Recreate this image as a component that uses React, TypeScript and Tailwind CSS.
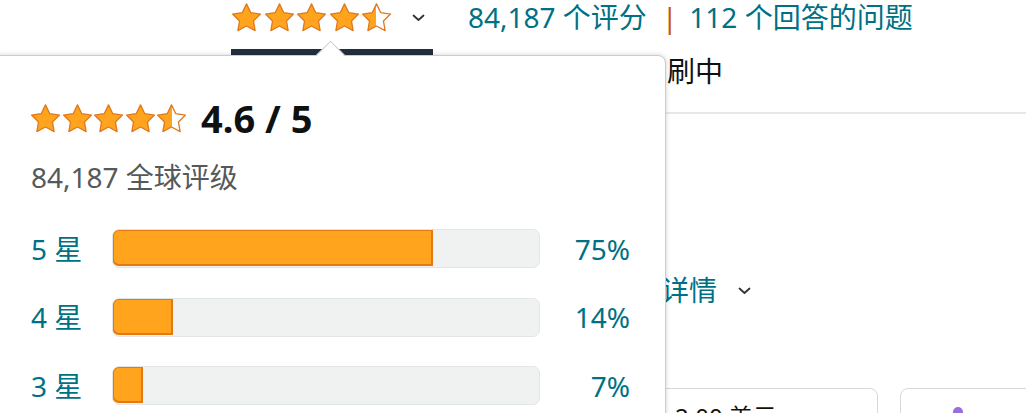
import React, { useId } from "react";

const STAR_PATH =
  "M12 2.2l2.95 6.1 6.7.95-4.85 4.7 1.15 6.65L12 17.45 6.05 20.6l1.15-6.65-4.85-4.7 6.7-.95z";

const Star: React.FC<{ fill?: "full" | "half"; size?: number }> = ({
  fill = "full",
  size = 28,
}) => {
  const id = useId().replace(/:/g, "");
  return (
    <svg width={size} height={size} viewBox="2 2 20 19.2" className="shrink-0">
      {fill === "half" && (
        <defs>
          <linearGradient id={`h${id}`} x1="0" x2="1" y1="0" y2="0">
            <stop offset="0.5" stopColor="#ffa41c" />
            <stop offset="0.5" stopColor="#ffffff" />
          </linearGradient>
        </defs>
      )}
      <path
        d={STAR_PATH}
        fill={fill === "half" ? `url(#h${id})` : "#ffa41c"}
        stroke="#de7921"
        strokeWidth="0.9"
        strokeLinejoin="round"
      />
    </svg>
  );
};

const Stars: React.FC<{ size: number; className?: string }> = ({ size, className = "" }) => (
  <div className={`flex items-center ${className}`}>
    <Star size={size} />
    <Star size={size} />
    <Star size={size} />
    <Star size={size} />
    <Star size={size} fill="half" />
  </div>
);

const Chevron: React.FC<{ className?: string }> = ({ className = "" }) => (
  <svg width="13" height="8" viewBox="0 0 13 8" className={className}>
    <polyline
      points="1.5,1.5 6.5,6 11.5,1.5"
      fill="none"
      stroke="#333"
      strokeWidth="1.8"
      strokeLinecap="round"
      strokeLinejoin="round"
    />
  </svg>
);

const rows = [
  { label: "5 星", pct: 75 },
  { label: "4 星", pct: 14 },
  { label: "3 星", pct: 7 },
];

const HistogramRow: React.FC<{ label: string; pct: number }> = ({ label, pct }) => (
  <div className="flex items-center h-[39px]">
    <span className="w-[81px] text-[#007185]">{label}</span>
    <div className="w-[428px] h-[39px] rounded-[7px] bg-[#f0f2f2] border border-[#e3e6e6] overflow-hidden">
      <div
        className="h-full rounded-l-[7px] bg-[#ffa41c] border-2 border-[#e47911] -m-px"
        style={{ width: `calc(${pct}% + 1px)` }}
      />
    </div>
    <span className="w-[90px] text-right text-[#007185]">{pct}%</span>
  </div>
);

export default function App() {
  return (
    <div className="relative w-[1026px] h-[413px] overflow-hidden bg-white text-[28px] text-[#0f1111] font-['Noto_Sans','Noto_Sans_CJK_SC',sans-serif]">
      {/* page behind the popover */}
      <div className="flex items-center h-[34px] pl-[232px]">
        <Stars size={29} className="gap-[3.5px]" />
        <Chevron className="ml-[21px] mt-[2px]" />
        <span className="ml-[43px] text-[#007185] leading-[28px]">84,187 个评分</span>
        <span className="ml-[15px] mr-[12px] text-[#c45500] leading-[28px]">|</span>
        <span className="text-[#007185] leading-[28px]">112 个回答的问题</span>
      </div>
      <div className="ml-[231px] mt-[15px] w-[202px] h-[6px] bg-[#232f3e]" />

      <div className="flex">
        <div className="w-[639px] shrink-0" />
        <div className="flex-1 flex flex-col">
          <div className="leading-[32px]">印刷中</div>
          <div className="mt-[25px] h-[2px] bg-[#e7e7e7]" />
          <div className="mt-[158px] ml-[22px] flex items-center leading-[36px] text-[#007185]">
            <span>详情</span>
            <Chevron className="ml-[21px] mt-[2px]" />
          </div>
          <div className="mt-[80px] flex gap-[22px]">
            <div className="w-[239px] h-[60px] rounded-[8px] border border-[#d5d9d9] pl-[35px] pt-[13px] text-[24px] leading-[30px]">
              2.00 美元
            </div>
            <div className="w-[240px] h-[60px] rounded-[8px] border border-[#d5d9d9] pl-[52px] pt-[18px]">
              <div className="w-[10px] h-[10px] rounded-full bg-[#9b6ee0]" />
            </div>
          </div>
        </div>
      </div>

      {/* rating popover */}
      <div className="absolute left-[-2px] top-[55px] w-[668px] h-[400px] bg-white border border-[#cccccc] rounded-tr-[8px] shadow-[0_0_5px_rgba(0,0,0,0.18)] pl-[32px] pt-[46px]">
        <div className="absolute left-[321px] top-[-11px] w-[21px] h-[21px] rotate-45 bg-white border-t border-l border-[#cccccc]" />
        <div className="flex items-center h-[32px]">
          <Stars size={29} className="gap-[2.5px]" />
          <span className="ml-[15px] text-[38px] font-bold leading-[32px]">4.6 / 5</span>
        </div>
        <div className="mt-[25px] leading-[36px] text-[#565959]">84,187 全球评级</div>
        <div className="mt-[34px] flex flex-col gap-[29.5px]">
          {rows.map((r) => (
            <HistogramRow key={r.label} label={r.label} pct={r.pct} />
          ))}
        </div>
      </div>
    </div>
  );
}
